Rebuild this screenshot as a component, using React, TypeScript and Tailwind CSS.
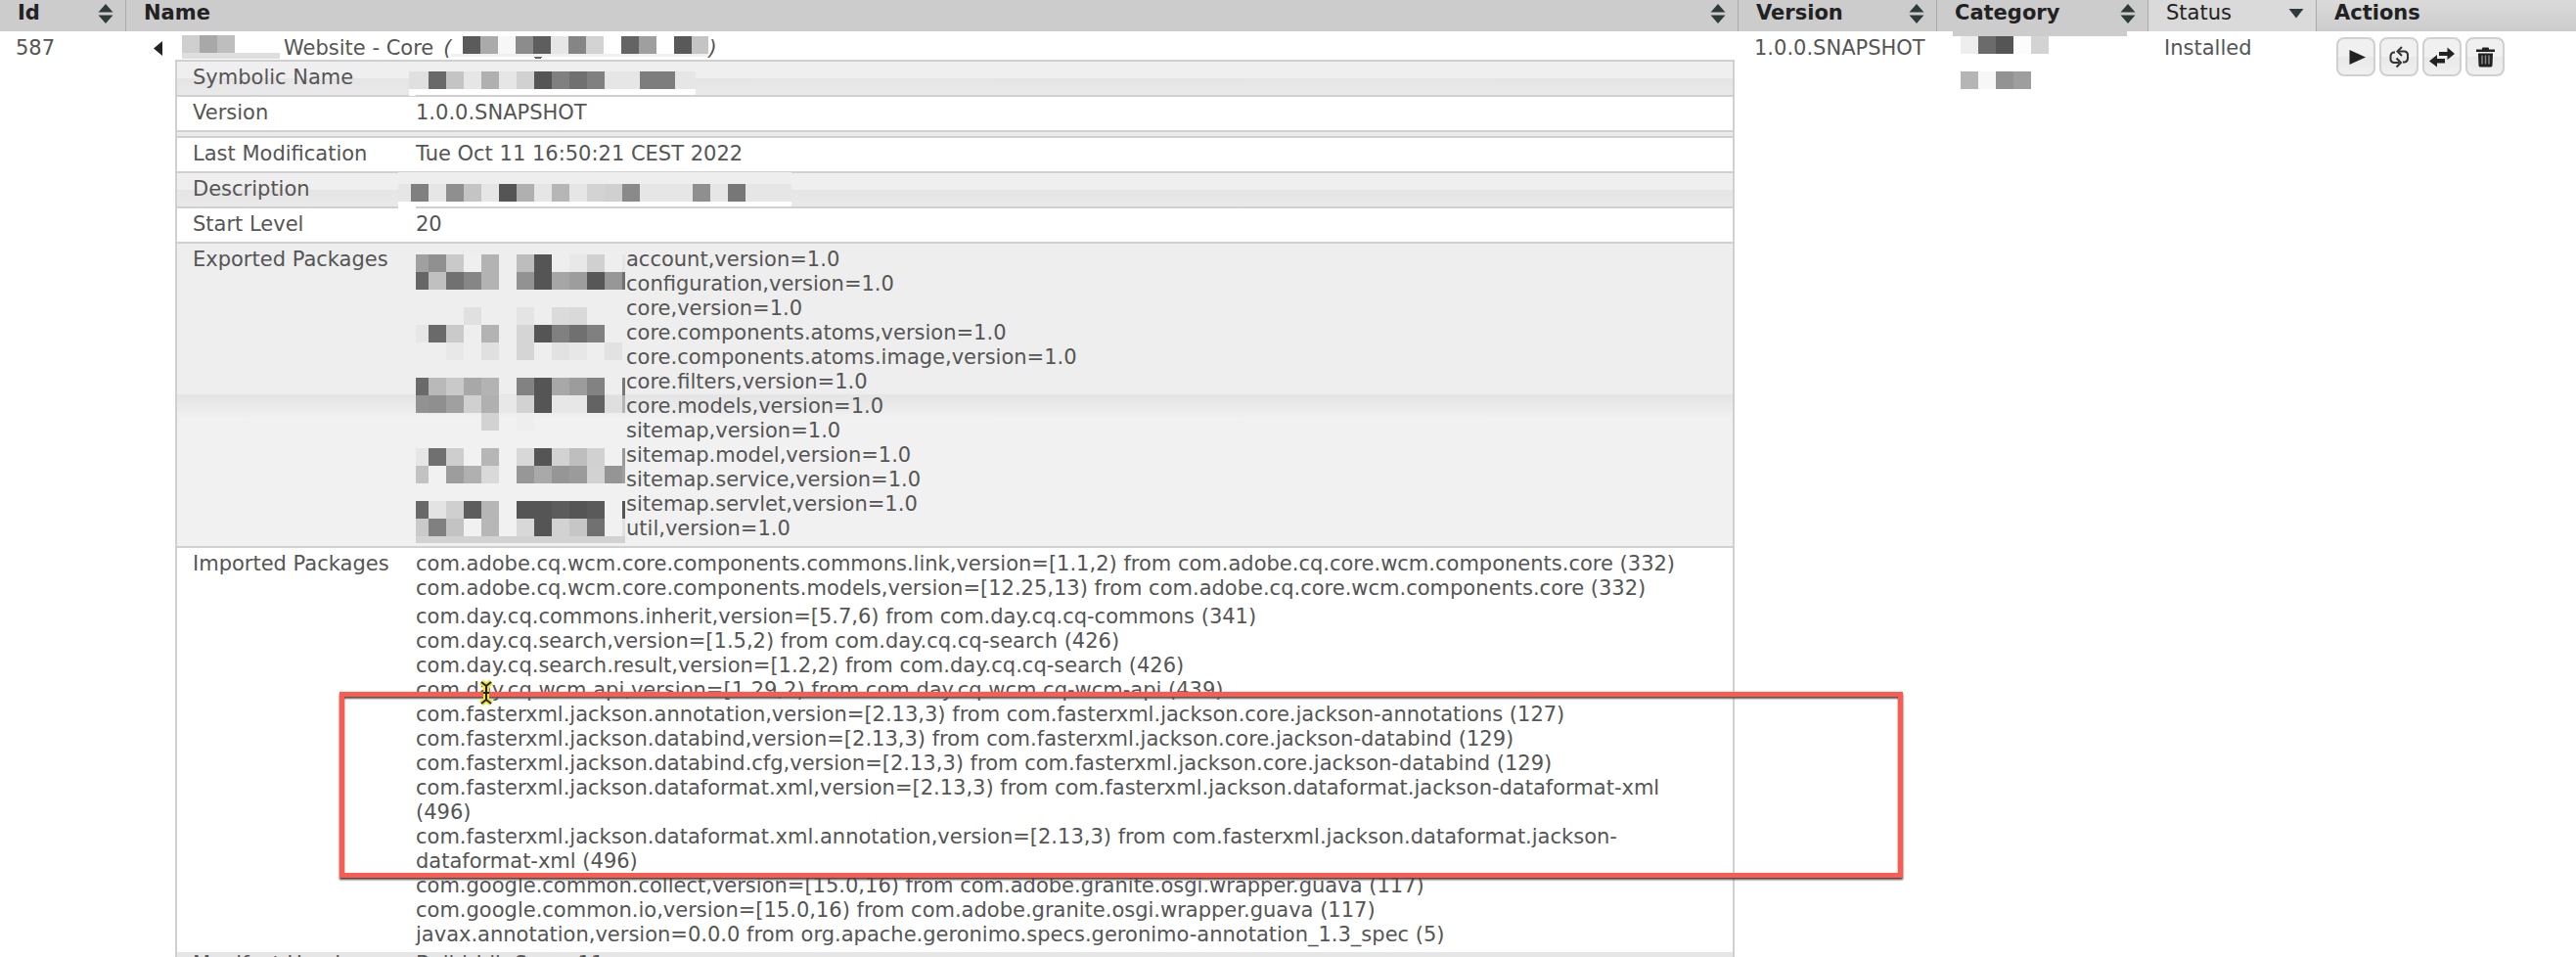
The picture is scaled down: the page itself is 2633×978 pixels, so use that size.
import React from "react";

// Gray values per cell, "--" leaves the cell empty
const EXPORTED_MASK = [
  "a0 90 c9 ef b3 -- bd 55 -- e8 d0 -- e6",
  "66 c0 71 86 b3 -- 92 55 a6 9d 57 97 70",
  "-- -- -- -- -- -- -- -- -- -- -- -- --",
  "-- -- -- e0 -- -- e4 -- db d9 -- -- --",
  "e6 6a ca -- b3 -- d5 55 80 70 80 -- --",
  "-- -- e8 -- e0 -- d5 -- e2 e7 -- e2 --",
  "-- -- -- -- -- -- -- -- -- -- -- -- --",
  "6a b9 c9 a8 b3 -- 82 55 a8 9c 82 -- 77",
  "92 8f a0 d0 b0 e8 d2 55 e7 e7 63 df b3",
  "-- -- -- -- d2 -- ee -- -- -- -- -- --",
  "-- -- -- -- -- -- -- -- -- -- -- -- --",
  "e6 70 ce -- b6 -- d8 55 d2 be d1 -- 99",
  "c2 -- 9d b0 d9 -- 97 a9 96 9b d2 95 a0",
  "-- -- -- -- -- -- -- -- -- -- -- -- --",
  "69 e3 cf 5d b6 -- 55 55 5c 55 5a -- 55",
  "ca 80 c3 -- b7 -- d8 55 d2 c6 71 -- e0",
];

const EXPORTED = [
  "account,version=1.0",
  "configuration,version=1.0",
  "core,version=1.0",
  "core.components.atoms,version=1.0",
  "core.components.atoms.image,version=1.0",
  "core.filters,version=1.0",
  "core.models,version=1.0",
  "sitemap,version=1.0",
  "sitemap.model,version=1.0",
  "sitemap.service,version=1.0",
  "sitemap.servlet,version=1.0",
  "util,version=1.0",
];

const IMPORTED_ADOBE = [
  "com.adobe.cq.wcm.core.components.commons.link,version=[1.1,2) from com.adobe.cq.core.wcm.components.core (332)",
  "com.adobe.cq.wcm.core.components.models,version=[12.25,13) from com.adobe.cq.core.wcm.components.core (332)",
];

const IMPORTED_DAY = [
  "com.day.cq.commons.inherit,version=[5.7,6) from com.day.cq.cq-commons (341)",
  "com.day.cq.search,version=[1.5,2) from com.day.cq.cq-search (426)",
  "com.day.cq.search.result,version=[1.2,2) from com.day.cq.cq-search (426)",
  "com.day.cq.wcm.api,version=[1.29,2) from com.day.cq.wcm.cq-wcm-api (439)",
];

const IMPORTED_JACKSON = [
  "com.fasterxml.jackson.annotation,version=[2.13,3) from com.fasterxml.jackson.core.jackson-annotations (127)",
  "com.fasterxml.jackson.databind,version=[2.13,3) from com.fasterxml.jackson.core.jackson-databind (129)",
  "com.fasterxml.jackson.databind.cfg,version=[2.13,3) from com.fasterxml.jackson.core.jackson-databind (129)",
  "com.fasterxml.jackson.dataformat.xml,version=[2.13,3) from com.fasterxml.jackson.dataformat.jackson-dataformat-xml (496)",
  "com.fasterxml.jackson.dataformat.xml.annotation,version=[2.13,3) from com.fasterxml.jackson.dataformat.jackson-dataformat-xml (496)",
];

const IMPORTED_OTHER = [
  "com.google.common.collect,version=[15.0,16) from com.adobe.granite.osgi.wrapper.guava (117)",
  "com.google.common.io,version=[15.0,16) from com.adobe.granite.osgi.wrapper.guava (117)",
  "javax.annotation,version=0.0.0 from org.apache.geronimo.specs.geronimo-annotation_1.3_spec (5)",
];

interface MosaicProps {
  rows: string[];
  width: number;
  height: number;
  // Width of the first cell, the others are 18px
  first?: number;
  left?: number;
  top?: number;
  className?: string;
  children?: React.ReactNode;
}

const Mosaic: React.FC<MosaicProps> = ({
  rows,
  width,
  height,
  first = 18,
  left = 0,
  top = 0,
  className,
  children,
}) => (
  <svg width={width} height={height} className={className} shapeRendering="crispEdges" aria-hidden="true">
    {children}
    {rows.map((row, y) =>
      row.split(" ").map((gray, x) =>
        gray === "--" ? null : (
          <rect
            key={`${x}-${y}`}
            x={left + (x === 0 ? 0 : first + (x - 1) * 18)}
            y={top + y * 18}
            width={x === 0 ? first : 18}
            height={18}
            fill={`#${gray}${gray}${gray}`}
          />
        )
      )
    )}
  </svg>
);

const SortIcon = () => (
  <svg width="16" height="20" viewBox="0 0 16 20" className="shrink-0" fill="#2f3b3b" aria-hidden="true">
    <path d="M8 0 L15.5 8.5 H0.5 Z" />
    <path d="M0.5 11.5 H15.5 L8 20 Z" />
  </svg>
);

const SortDownIcon = () => (
  <svg width="16" height="20" viewBox="0 0 16 20" className="shrink-0" fill="#2f3b3b" aria-hidden="true">
    <path d="M0.5 5 H15.5 L8 14.5 Z" />
  </svg>
);

const PlayIcon = () => (
  <svg width="24" height="24" viewBox="0 0 24 24" fill="#222" aria-hidden="true">
    <path d="M5.5 5 L22 12.5 L5.5 20 Z" />
  </svg>
);

const RefreshIcon = () => (
  <svg width="24" height="24" viewBox="0 0 24 24" fill="none" stroke="#333" strokeWidth="2" aria-hidden="true">
    <path d="M8 7.5 H6.5 Q4 8 3.5 11 V15 Q4 17.5 6.5 18 H12" />
    <path d="M9.5 13.5 L14 18 L9.5 22.5" />
    <path d="M16 17.5 H18 Q20.5 17 21 14 V9.5 Q20.5 7 18 6.5 H12" />
    <path d="M15 2 L10.5 6.5 L15 11" />
  </svg>
);

const UpdateIcon = () => (
  <svg width="26" height="24" viewBox="0 0 26 24" fill="#222" aria-hidden="true">
    <path d="M10 7 H18.5 V2.5 L26 9 L18.5 15 V11 H10 Z" />
    <path d="M16 14 H8 V10 L0 16.5 L8 22.5 V18.5 H16 Z" />
  </svg>
);

const TrashIcon = () => (
  <svg width="24" height="24" viewBox="0 0 24 24" aria-hidden="true">
    <path d="M9 4.5 V3.5 Q9 2.5 10 2.5 H15 Q16 2.5 16 3.5 V4.5 H22 V7 H3 V4.5 Z" fill="#222" />
    <path d="M5 8.5 H20 L19.5 21 Q19.3 22.5 17.5 22.5 H7.5 Q5.7 22.5 5.5 21 Z" fill="#222" />
    <path d="M9 10.5 V19.5 M12.5 10.5 V19.5 M16 10.5 V19.5" stroke="#888" strokeWidth="1.5" />
  </svg>
);

const headers = [
  { label: "Id", width: "w-[129px]", icon: <SortIcon /> },
  { label: "Name", width: "", icon: <SortIcon /> },
  { label: "Version", width: "w-[203px]", icon: <SortIcon /> },
  { label: "Category", width: "w-[216px]", icon: <SortIcon /> },
  { label: "Status", width: "w-[172px]", icon: <SortDownIcon />, active: true },
  { label: "Actions", width: "w-[265px]" },
];

const actions = [
  { label: "Start", icon: <PlayIcon /> },
  { label: "Refresh Package Imports", icon: <RefreshIcon /> },
  { label: "Update", icon: <UpdateIcon /> },
  { label: "Uninstall", icon: <TrashIcon /> },
];

const STRIPE = "bg-[linear-gradient(#efefef_50%,#e5e5e5_50%,#e9e9e9)]";
const TALL_STRIPE = "bg-[linear-gradient(#eeeeee_50%,#e4e4e4_50%,#f1f1f1_58%)]";

interface DetailRowProps {
  label: string;
  background?: string;
  children: React.ReactNode;
}

const DetailRow: React.FC<DetailRowProps> = ({ label, background = "bg-white", children }) => (
  <tr className="align-top">
    <th
      scope="row"
      className={`border-t-2 border-[#d0d0d0] pt-1 pb-[5px] pl-4 text-left font-normal whitespace-nowrap ${background}`}
    >
      {label}
    </th>
    <td className={`relative border-t-2 border-[#d0d0d0] pt-1 pr-6 pb-[5px] ${background}`}>{children}</td>
  </tr>
);

const Lines: React.FC<{ items: string[] }> = ({ items }) => (
  <>
    {items.map((item) => (
      <div key={item}>{item}</div>
    ))}
  </>
);

const BundleDetails = () => (
  <div className="mr-1 ml-[50px] border-x-2 border-[#d0d0d0]">
    <table className="w-full table-fixed border-separate border-spacing-0">
      <colgroup>
        <col className="w-[244px]" />
        <col />
      </colgroup>
      <tbody>
        <DetailRow label="Symbolic Name" background={STRIPE}>
          <Mosaic
            rows={["e0 69 c4 e6 b0 e6 d1 55 80 70 80 e6 e6 7d 7d e6 e6"]}
            width={293}
            height={25}
            first={20}
            className="absolute top-[10px] -left-[7px]"
          >
            <rect width="293" height="25" fill="#fff" />
          </Mosaic>
        </DetailRow>
        <DetailRow label="Version">1.0.0.SNAPSHOT</DetailRow>
        <tr>
          <td colSpan={2} className="h-[6px] border-t-2 border-[#d0d0d0] bg-[#ebebeb]" />
        </tr>
        <DetailRow label="Last Modification">Tue Oct 11 16:50:21 CEST 2022</DetailRow>
        <DetailRow label="Description" background={STRIPE}>
          <Mosaic
            rows={["e6 80 e6 8f c4 e6 55 b0 e6 b6 e6 d3 d0 8a e6 e6 e6 8f e6 77 e6 e6 e6 e6"]}
            width={402}
            height={37}
            first={13}
            top={12}
            className="absolute -top-px -left-[18px]"
          >
            <rect width="402" height="30" fill="#eee" />
            <rect y="30" width="402" height="7" fill="#fff" />
          </Mosaic>
        </DetailRow>
        <DetailRow label="Start Level">20</DetailRow>
        <DetailRow label="Exported Packages" background={TALL_STRIPE}>
          <div className="flex gap-px">
            <Mosaic rows={EXPORTED_MASK} width={214} height={295} first={13} className="mt-[7px] -mb-1 shrink-0">
              <rect y="288" width="214" height="7" fill="#d2d2d2" />
            </Mosaic>
            <div>
              <Lines items={EXPORTED} />
            </div>
          </div>
        </DetailRow>
        <DetailRow label="Imported Packages">
          <Lines items={IMPORTED_ADOBE} />
          <div className="mt-1">
            <Lines items={IMPORTED_DAY} />
          </div>
          <div className="relative">
            <Lines items={IMPORTED_JACKSON} />
            {/* Highlighted packages */}
            <div className="absolute -top-[11px] -bottom-1 -left-[78px] w-[1598px] border-[5px] border-[#fb5b50] shadow-[0_2px_2px_#444,inset_0_2px_2px_#555]" />
            <svg width="16" height="28" viewBox="0 0 16 28" className="absolute -top-6 left-[64px]" fill="none" aria-hidden="true">
              <path d="M3 3 L8 7 L13 3 M8 7 V21 M3 25 L8 21 L13 25 M5 14 H11" stroke="#f0e62e" strokeWidth="6" />
              <path d="M3 3 L8 7 L13 3 M8 7 V21 M3 25 L8 21 L13 25 M5 14 H11" stroke="#222" strokeWidth="2" />
            </svg>
          </div>
          <Lines items={IMPORTED_OTHER} />
        </DetailRow>
        <tr className="bg-[#e6e6e6]">
          <th scope="row" className="pl-4 text-left font-normal">
            Manifest Headers
          </th>
          <td>Build-Jdk-Spec: 11</td>
        </tr>
      </tbody>
    </table>
  </div>
);

export default function App() {
  return (
    <div className="h-screen overflow-hidden bg-white font-['Verdana','DejaVu_Sans',sans-serif] text-[21px] leading-[25px] text-[#555]">
      <table className="w-full table-fixed border-separate border-spacing-0">
        <thead>
          <tr className="bg-[#ccc] text-[#222]">
            {headers.map(({ label, width, icon, active }) => (
              <th
                key={label}
                scope="col"
                className={`${width} h-8 border-r border-[#aaa] p-0 text-left last:border-r-0 last:bg-[linear-gradient(#dadada,#cccccc)] ${
                  active ? "bg-[#dadada] font-normal" : "font-bold"
                }`}
              >
                <div className="flex h-8 items-center justify-between pr-3 pb-[5px] pl-[18px]">
                  {label}
                  {icon}
                </div>
              </th>
            ))}
          </tr>
        </thead>
        <tbody>
          <tr className="align-top">
            <td className="pt-[5px] pl-4">587</td>
            <td className="p-0">
              <div className="flex h-[29px] pt-[5px] pl-7">
                <button type="button" aria-label="Hide details" className="mt-1 h-4 w-[29px] shrink-0">
                  <svg width="9" height="15" viewBox="0 0 9 15" fill="#222" aria-hidden="true">
                    <path d="M9 0 V15 L0 7.5 Z" />
                  </svg>
                </button>
                <Mosaic rows={["cf a8 be"]} width={100} height={24} className="mr-1 -mt-px shrink-0">
                  <rect y="18" width="100" height="6" fill="#dedede" />
                </Mosaic>
                <span>Website - Core</span>
                <em className="ml-[10px] flex">
                  (
                  <Mosaic rows={["-- 5b aa f7 8c 5e e6 85 d3 -- 64 9f -- 59 c4"]} width={263} height={24} first={12} className="shrink-0">
                    <path d="M84 19 Q89 25 94 19" stroke="#666" strokeWidth="3" fill="none" />
                    <rect y="18" width="263" height="3" fill="#f0f0f0" />
                  </Mosaic>
                  )
                </em>
              </div>
              <BundleDetails />
            </td>
            <td className="pt-[5px] pl-4">1.0.0.SNAPSHOT</td>
            <td className="p-0">
              <Mosaic rows={["ee 6b 55 fc d3", "-- -- -- -- --", "b5 f7 93 9e"]} width={178} height={60} left={8} top={5} className="ml-4">
                <rect width="178" height="5" fill="#ccc" />
              </Mosaic>
            </td>
            <td className="pt-[5px] pl-4">Installed</td>
            <td className="pt-[6px] pl-5">
              <div className="flex gap-1">
                {actions.map(({ label, icon }) => (
                  <button
                    key={label}
                    type="button"
                    aria-label={label}
                    className="flex size-10 items-center justify-center rounded-lg border-2 border-[#d0d0d0] bg-[linear-gradient(#f0f0f0_50%,#e8e8e8_50%,#f0f0f0)]"
                  >
                    {icon}
                  </button>
                ))}
              </div>
            </td>
          </tr>
        </tbody>
      </table>
    </div>
  );
}
